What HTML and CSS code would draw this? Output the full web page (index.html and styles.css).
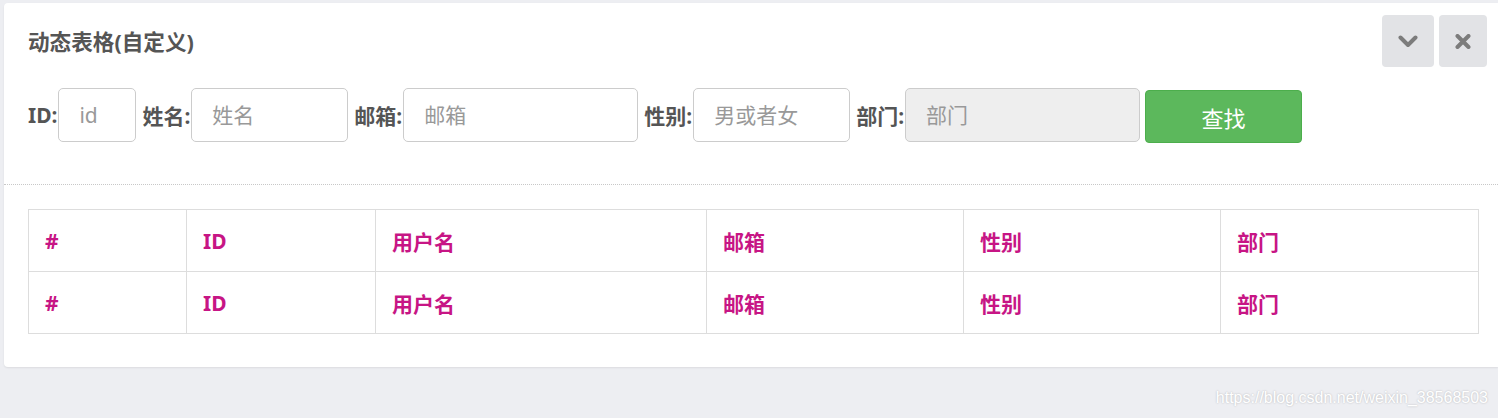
FILE: index.html
```html
<!DOCTYPE html>
<html lang="zh">
<head>
<meta charset="utf-8">
<title>动态表格(自定义)</title>
<link rel="stylesheet" href="styles.css">
</head>
<body>
<div class="page">
  <div class="card">
    <div class="card-header">
      <h5 class="title">动态表格(自定义)</h5>
      <div class="tools">
        <button class="tool tool-wide" type="button" aria-label="collapse">
          <svg width="20" height="13" viewBox="0 0 20 13"><path d="M2.5 2.5 L10 10 L17.5 2.5" fill="none" stroke="#7c7c7c" stroke-width="4" stroke-linecap="round" stroke-linejoin="round"/></svg>
        </button>
        <button class="tool" type="button" aria-label="close">
          <svg width="16" height="15" viewBox="0 0 16 15"><path d="M2.5 2 L13.5 13 M13.5 2 L2.5 13" fill="none" stroke="#7c7c7c" stroke-width="4" stroke-linecap="round"/></svg>
        </button>
      </div>
    </div>
    <form class="search">
      <label class="lbl">ID:</label><input class="inp w-xs" placeholder="id">
      <label class="lbl">姓名:</label><input class="inp w-md" placeholder="姓名">
      <label class="lbl">邮箱:</label><input class="inp w-lg" placeholder="邮箱">
      <label class="lbl">性别:</label><input class="inp w-md" placeholder="男或者女">
      <label class="lbl">部门:</label><input class="inp w-lg inp-disabled" placeholder="部门" readonly>
      <button class="btn-search" type="button">查找</button>
    </form>
    <div class="divider"></div>
    <div class="table-wrap">
      <table class="grid">
        <colgroup>
          <col style="width:158px"><col style="width:189px"><col style="width:331px"><col style="width:257px"><col style="width:257px"><col>
        </colgroup>
        <tr><td>#</td><td>ID</td><td>用户名</td><td>邮箱</td><td>性别</td><td>部门</td></tr>
        <tr><td>#</td><td>ID</td><td>用户名</td><td>邮箱</td><td>性别</td><td>部门</td></tr>
      </table>
    </div>
  </div>
  <div class="watermark">https://blog.csdn.net/weixin_38568503</div>
</div>
</body>
</html>
```
FILE: styles.css
```css
html, body {
  margin: 0;
  padding: 0;
  background: #edeef2;
  font-family: "Noto Sans", "Noto Sans CJK SC", sans-serif;
}
.page {
  padding: 3px 0 0 4px;
  height: 418px;
  box-sizing: border-box;
}
.card {
  background: #fff;
  border-radius: 4px 0 0 4px;
  box-shadow: 0 1px 2px rgba(0,0,0,0.08);
  height: 364px;
  box-sizing: border-box;
  padding-bottom: 34px;
}
.card-header {
  display: flex;
  justify-content: space-between;
  align-items: center;
  padding: 12px 11px 0 24px;
}
.title {
  margin: 0;
  font-size: 21.6px;
  font-weight: 700;
  color: #555;
  line-height: 26px;
  position: relative;
  top: 1px;
}
.tools {
  display: flex;
  gap: 5px;
}
.tool {
  width: 48px;
  height: 52px;
  border: 0;
  border-radius: 4px;
  background: #e2e3e6;
  display: flex;
  align-items: center;
  justify-content: center;
  padding: 0;
}
.tool-wide { width: 52px; }
.search {
  display: flex;
  align-items: center;
  margin: 21px 0 0 24px;
  height: 54px;
}
.lbl {
  font-size: 21px;
  font-weight: 700;
  color: #555;
  white-space: nowrap;
  padding-right: 1px;
}
.inp {
  height: 54px;
  box-sizing: border-box;
  border: 1px solid #ccc;
  border-radius: 5px;
  padding: 0 20px;
  font-size: 21px;
  font-family: inherit;
  color: #555;
  background: #fff;
  margin-right: 6px;
  outline: none;
}
.inp::placeholder { color: #999; }
.inp-disabled { background: #eee; margin-right: 5px; }
.w-xs { width: 78px; }
.w-md { width: 157px; }
.w-lg { width: 235px; }
.btn-search {
  width: 157px;
  height: 53px;
  margin-top: 3px;
  border: 1px solid #4cae4c;
  border-radius: 4px;
  background: #5cb85c;
  color: #fff;
  font-size: 22px;
  font-family: inherit;
}
.divider {
  border-top: 1px dotted #c8c8c8;
  margin-top: 42px;
}
.table-wrap {
  padding: 24px 20px 0 24px;
}
.grid {
  width: 1451px;
  border-collapse: collapse;
  table-layout: fixed;
}
.grid td {
  border: 1px solid #ddd;
  height: 62px;
  box-sizing: border-box;
  padding: 0 16px;
  font-size: 21px;
  font-weight: 700;
  color: #c71585;
}
.watermark {
  text-align: right;
  padding: 22px 10px 0 0;
  font-family: "Liberation Sans", Arial, sans-serif;
  font-size: 16px;
  color: #fff;
  text-shadow: 0 0 2px rgba(0,0,0,0.25);
}
```
